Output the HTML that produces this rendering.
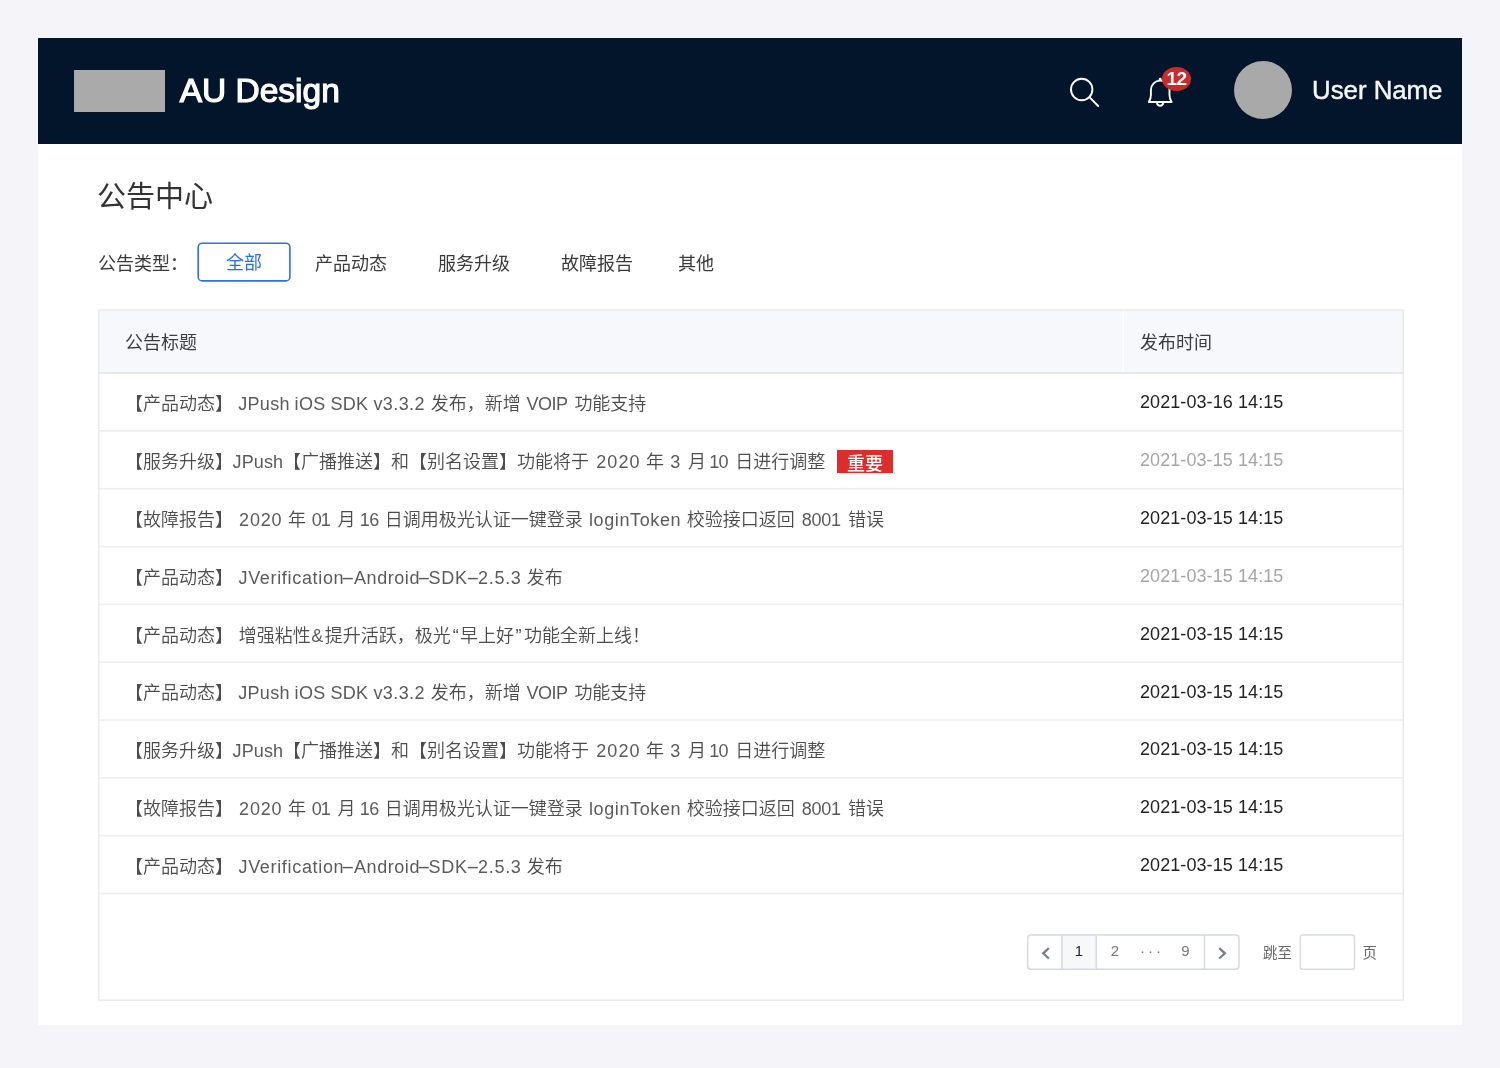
<!DOCTYPE html>
<html lang="zh-CN">
<head>
<meta charset="utf-8">
<title>公告中心</title>
<style>
*{box-sizing:border-box;margin:0;padding:0}
html,body{width:1500px;height:1068px;overflow:hidden}
body{background:#f4f4f9;will-change:transform;font-family:"Liberation Sans","Noto Sans CJK SC",sans-serif;color:#333;position:relative}
.abs{position:absolute;white-space:nowrap}
#card{left:38px;top:38px;width:1424px;height:986.5px;background:#fff}
#hdr{left:38px;top:38px;width:1424px;height:106.3px;background:#03152a}
#logo{left:74px;top:70.2px;width:90.6px;height:41.8px;background:#aaa}
#brand{left:179.7px;top:70px;font-size:33.5px;line-height:42px;color:#fff;-webkit-text-stroke:1.2px #fff}
#avatar{left:1234px;top:61.4px;width:58px;height:58px;border-radius:50%;background:#a9a9a9}
#uname{left:1312px;top:72.4px;font-size:25.8px;line-height:36px;color:#f6f6f6;-webkit-text-stroke:.45px #f6f6f6}
#badge{left:1162px;top:66.7px;width:29.2px;height:24px;border-radius:50%;background:#cb2a2c;color:#fff;font-size:19px;line-height:24px;text-align:center;font-weight:bold;letter-spacing:-.5px}
#title{left:97px;top:175.5px;font-size:29px;line-height:42px;color:#333}
.flt{top:250.5px;font-size:18px;line-height:26px;color:#3a3a3a}
#all{left:197px;top:242px;width:94px;height:40px;color:#2b6de8;font-size:18px;line-height:42px;text-align:center}
.th{top:330px;font-size:18px;line-height:26px;color:#3d3d3d}
.t{left:0;width:1100px;height:26px;font-size:18px;line-height:26px;color:#4c4c4c;font-weight:350}
.t .l{color:#5a5a5a}
.t span{position:absolute;top:0;white-space:nowrap}
.t .hy{transform-origin:0 50%}
.d{left:1140px;font-size:18px;line-height:26px;color:#222;letter-spacing:.08px}
.d.g{color:#a5a5a5}
.t .tag{top:1px;width:56px;height:23px;background:#dc2d2d;color:#fff;font-size:18px;line-height:29px;text-align:center;font-weight:500}
.pg{top:941px;font-size:15px;line-height:20px;text-align:center;color:#777}
.pl{top:942.5px;font-size:14.4px;line-height:20px;color:#666}
</style>
</head>
<body>
<div class="abs" id="card"></div>
<div class="abs" id="hdr"></div>
<div class="abs" id="logo"></div>
<div class="abs" id="brand">AU Design</div>
<svg class="abs" style="left:1060px;top:68px" width="130" height="50" viewBox="0 0 130 50" fill="none" stroke="#fff" stroke-width="1.9">
<circle cx="21.7" cy="21.5" r="10.7"/><path d="M29.4 29.2 L38.2 38" stroke-linecap="round"/>
<path d="M88.8 34 C90.5 31.5 90.9 29.5 90.9 27 V21.9 A9.3 9.3 0 0 1 109.5 21.9 V27 C109.5 29.5 109.9 31.5 111.6 34 Z" stroke-linejoin="round"/>
<path d="M96.9 35 A3.3 3.6 0 0 0 103.3 35"/>
<circle cx="100.2" cy="11.2" r="1.4" fill="#fff" stroke="none"/>
</svg>
<div class="abs" id="badge">12</div>
<div class="abs" id="avatar"></div>
<div class="abs" id="uname">User Name</div>

<div class="abs" id="title">公告中心</div>
<div class="abs flt" style="left:98px">公告类型：</div>
<div class="abs" id="all">全部</div>
<div class="abs flt" style="left:315px">产品动态</div>
<div class="abs flt" style="left:438px">服务升级</div>
<div class="abs flt" style="left:561px">故障报告</div>
<div class="abs flt" style="left:678px">其他</div>

<svg class="abs" style="left:0;top:0" width="1500" height="1068" viewBox="0 0 1500 1068">
<rect x="99" y="310" width="1304" height="62.5" fill="#f7f8fc"/>
<rect x="1122.3" y="310" width="1.8" height="62.5" fill="#fff"/>
<rect x="98.65" y="309.95" width="1304.6" height="690.2" fill="none" stroke="#ebebed" stroke-width="1.5"/>
<rect x="99" y="372.05" width="1304" height="1.8" fill="#e6e6e9"/>
<rect x="99" y="430.04" width="1304" height="1.6" fill="#ededee"/>
<rect x="99" y="487.88" width="1304" height="1.6" fill="#ededee"/>
<rect x="99" y="545.72" width="1304" height="1.6" fill="#ededee"/>
<rect x="99" y="603.56" width="1304" height="1.6" fill="#ededee"/>
<rect x="99" y="661.40" width="1304" height="1.6" fill="#ededee"/>
<rect x="99" y="719.24" width="1304" height="1.6" fill="#ededee"/>
<rect x="99" y="777.08" width="1304" height="1.6" fill="#ededee"/>
<rect x="99" y="834.92" width="1304" height="1.6" fill="#ededee"/>
<rect x="99" y="892.76" width="1304" height="1.6" fill="#ededee"/>
<rect x="1062" y="935" width="34.2" height="34.3" fill="#f7f8fa"/>
<g fill="none" stroke="#d5dadf" stroke-width="1.5"><rect x="1027.65" y="935.05" width="211.3" height="34.2" rx="3.2" ry="3.2"/>
<path d="M1062 935 V969.3 M1096.2 935 V969.3 M1204.5 935 V969.3"/>
<rect x="1300.3" y="935.05" width="54.2" height="34.1" rx="2.5" ry="2.5" stroke="#d8dce0"/></g>
<rect x="198.2" y="243.2" width="91.7" height="37.7" rx="4" ry="4" fill="none" stroke="#2b70ea" stroke-width="1.6"/>
</svg>
<div class="abs th" style="left:125px">公告标题</div>
<div class="abs th" style="left:1140px">发布时间</div>

<div class="abs t" style="top:391px"><span style="left:125px">【产品动态】</span> <span class="l" style="left:238.27px;letter-spacing:0.3px">JPush</span> <span class="l" style="left:294.61px;letter-spacing:0.28px">iOS</span> <span class="l" style="left:330.54px;letter-spacing:0.22px">SDK</span> <span class="l" style="left:373.49px;letter-spacing:0.39px">v3.3.2</span> <span style="left:430.74px">发布，新增</span> <span class="l" style="left:526.39px;letter-spacing:-0.44px">VOIP</span> <span style="left:574.38px">功能支持</span></div>
<div class="abs d" style="top:389px">2021-03-16 14:15</div>
<div class="abs t" style="top:449px"><span style="left:125px">【服务升级】</span><span class="l" style="left:232.51px;letter-spacing:0.14px">JPush</span><span style="left:283px">【广播推送】和【别名设置】功能将于</span> <span class="l" style="left:596.28px;letter-spacing:1.06px">2020</span> <span style="left:646.06px">年</span> <span class="l" style="left:670.14px">3</span> <span style="left:687.9px">月</span> <span class="l" style="left:709.19px;letter-spacing:-0.58px">10</span> <span style="left:735.23px">日进行调整</span> <span class="tag" style="left:837px">重要</span></div>
<div class="abs d g" style="top:447px">2021-03-15 14:15</div>
<div class="abs t" style="top:507px"><span style="left:125px">【故障报告】</span> <span class="l" style="left:239.12px;letter-spacing:0.8px">2020</span> <span style="left:288.08px">年</span> <span class="l" style="left:311.79px;letter-spacing:-1.04px">01</span> <span style="left:337.58px">月</span> <span class="l" style="left:359.69px;letter-spacing:-0.53px">16</span> <span style="left:384.87px">日调用极光认证一键登录</span> <span class="l" style="left:589px;letter-spacing:0.61px">loginToken</span> <span style="left:686.68px">校验接口返回</span> <span class="l" style="left:801.78px;letter-spacing:-0.23px">8001</span> <span style="left:847.92px">错误</span></div>
<div class="abs d" style="top:505px">2021-03-15 14:15</div>
<div class="abs t" style="top:565px"><span style="left:125px">【产品动态】</span> <span class="l" style="left:238.51px;letter-spacing:0.67px">JVerification</span><span class="hy l" style="left:341.05px;transform:scaleX(2.27)">-</span><span class="l" style="left:354.06px;letter-spacing:0.55px">Android</span><span class="hy l" style="left:416.85px;transform:scaleX(2.27)">-</span><span class="l" style="left:428.53px;letter-spacing:0.69px">SDK</span><span class="hy l" style="left:466.45px;transform:scaleX(2.27)">-</span><span class="l" style="left:478.03px;letter-spacing:0.7px">2.5.3</span> <span style="left:526.67px">发布</span></div>
<div class="abs d g" style="top:563px">2021-03-15 14:15</div>
<div class="abs t" style="top:623px"><span style="left:125px">【产品动态】</span> <span style="left:238.74px">增强粘性</span><span class="l" style="left:311.2px">&amp;</span><span style="left:324.67px">提升活跃，极光</span><span style="left:452.8px">“</span><span style="left:460px">早上好</span><span style="left:515.38px">”</span><span style="left:524.04px">功能全新上线！</span></div>
<div class="abs d" style="top:621px">2021-03-15 14:15</div>
<div class="abs t" style="top:680px"><span style="left:125px">【产品动态】</span> <span class="l" style="left:238.27px;letter-spacing:0.3px">JPush</span> <span class="l" style="left:294.61px;letter-spacing:0.28px">iOS</span> <span class="l" style="left:330.54px;letter-spacing:0.22px">SDK</span> <span class="l" style="left:373.49px;letter-spacing:0.39px">v3.3.2</span> <span style="left:430.74px">发布，新增</span> <span class="l" style="left:526.39px;letter-spacing:-0.44px">VOIP</span> <span style="left:574.38px">功能支持</span></div>
<div class="abs d" style="top:679px">2021-03-15 14:15</div>
<div class="abs t" style="top:738px"><span style="left:125px">【服务升级】</span><span class="l" style="left:232.51px;letter-spacing:0.14px">JPush</span><span style="left:283px">【广播推送】和【别名设置】功能将于</span> <span class="l" style="left:596.28px;letter-spacing:1.06px">2020</span> <span style="left:646.06px">年</span> <span class="l" style="left:670.14px">3</span> <span style="left:687.9px">月</span> <span class="l" style="left:709.19px;letter-spacing:-0.58px">10</span> <span style="left:735.23px">日进行调整</span></div>
<div class="abs d" style="top:736px">2021-03-15 14:15</div>
<div class="abs t" style="top:796px"><span style="left:125px">【故障报告】</span> <span class="l" style="left:239.12px;letter-spacing:0.8px">2020</span> <span style="left:288.08px">年</span> <span class="l" style="left:311.79px;letter-spacing:-1.04px">01</span> <span style="left:337.58px">月</span> <span class="l" style="left:359.69px;letter-spacing:-0.53px">16</span> <span style="left:384.87px">日调用极光认证一键登录</span> <span class="l" style="left:589px;letter-spacing:0.61px">loginToken</span> <span style="left:686.68px">校验接口返回</span> <span class="l" style="left:801.78px;letter-spacing:-0.23px">8001</span> <span style="left:847.92px">错误</span></div>
<div class="abs d" style="top:794px">2021-03-15 14:15</div>
<div class="abs t" style="top:854px"><span style="left:125px">【产品动态】</span> <span class="l" style="left:238.51px;letter-spacing:0.67px">JVerification</span><span class="hy l" style="left:341.05px;transform:scaleX(2.27)">-</span><span class="l" style="left:354.06px;letter-spacing:0.55px">Android</span><span class="hy l" style="left:416.85px;transform:scaleX(2.27)">-</span><span class="l" style="left:428.53px;letter-spacing:0.69px">SDK</span><span class="hy l" style="left:466.45px;transform:scaleX(2.27)">-</span><span class="l" style="left:478.03px;letter-spacing:0.7px">2.5.3</span> <span style="left:526.67px">发布</span></div>
<div class="abs d" style="top:852px">2021-03-15 14:15</div>
<svg class="abs" style="left:1027px;top:934px" width="213" height="36" viewBox="0 0 213 36" fill="none" stroke="#7a7f88" stroke-width="2.3">
<path d="M21.9 14.1 L16.2 19.3 L21.9 24.5"/><path d="M192.2 14.1 L197.9 19.3 L192.2 24.5"/></svg>
<div class="abs pg" style="left:1062px;width:34px;color:#1c2330">1</div>
<div class="abs pg" style="left:1098px;width:34px">2</div>
<div class="abs pg" style="left:1134px;width:36px;letter-spacing:3px">···</div>
<div class="abs pg" style="left:1168.5px;width:34px">9</div>
<div class="abs pl" style="left:1263px">跳至</div>
<div class="abs pl" style="left:1362.5px">页</div>
</body>
</html>
